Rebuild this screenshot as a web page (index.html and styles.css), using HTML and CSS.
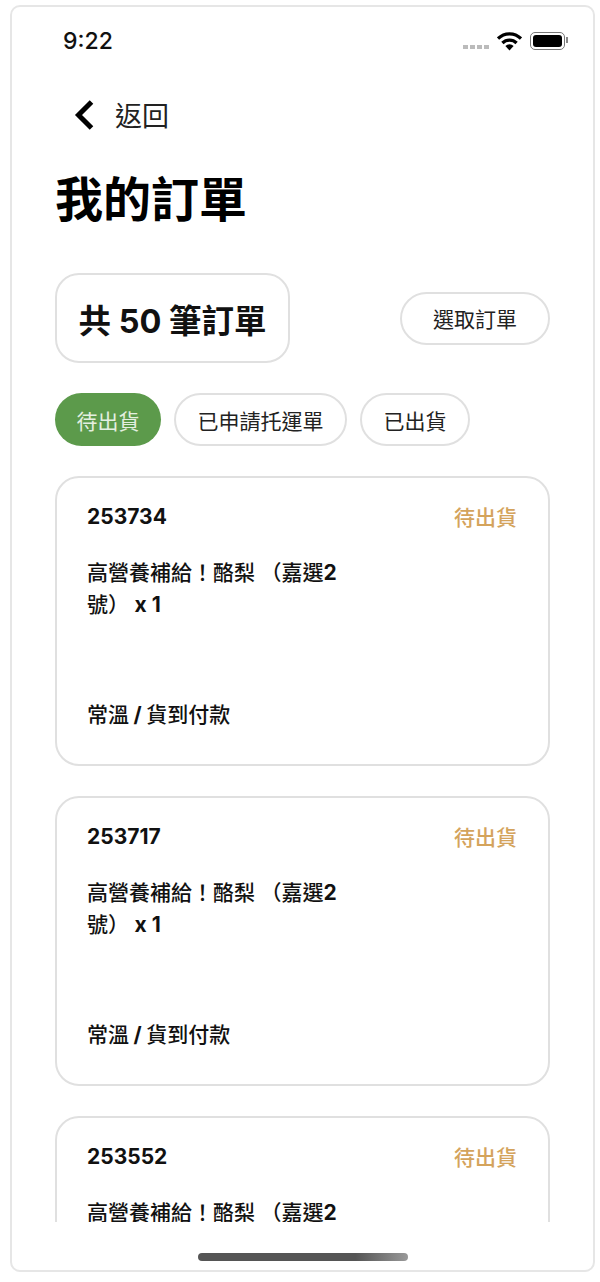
FILE: index.html
```html
<!DOCTYPE html>
<html lang="zh-Hant">
  <head>
    <meta charset="UTF-8" />
    <meta name="viewport" content="width=device-width, initial-scale=1.0" />
    <title>我的訂單</title>
    <link rel="stylesheet" href="styles.css">
  </head>
  <body>
    <section class="phone">
      <header class="status-bar">
        <span class="time">9:22</span>
        <div class="status-icons">
          <span class="signal"><i></i><i></i><i></i><i></i></span>
          <svg class="wifi" width="25" height="19" viewBox="0 0 25 19">
            <path d="M1 6.6a16.2 16.2 0 0 1 23 0" fill="none" stroke="#000" stroke-width="3.2"/>
            <path d="M5.4 11a10 10 0 0 1 14.2 0" fill="none" stroke="#000" stroke-width="3.2"/>
            <path d="M8.4 14a5.8 5.8 0 0 1 8.2 0L12.5 18.6z" fill="#000"/>
          </svg>
          <span class="battery"><i></i></span>
        </div>
      </header>

      <a class="back-link">
        <svg width="20" height="30" viewBox="0 0 20 30">
          <path d="M17.5 2L4.5 15l13 13" fill="none" stroke="#000" stroke-width="5"/>
        </svg>
        <span>返回</span>
      </a>

      <h1>我的訂單</h1>

      <div class="summary-row">
        <div class="summary">共 50 筆訂單</div>
        <button class="select-btn">選取訂單</button>
      </div>

      <nav class="tabs">
        <button class="tab active">待出貨</button>
        <button class="tab">已申請托運單</button>
        <button class="tab">已出貨</button>
      </nav>

      <div class="order-list">
        <article class="order">
          <div class="order-head">
            <span class="order-id">253734</span>
            <span class="order-status">待出貨</span>
          </div>
          <p class="order-items">高營養補給！酪梨 （嘉選<b>2</b>號） <b>x 1</b></p>
          <p class="order-meta">常溫 <b>/</b> 貨到付款</p>
        </article>

        <article class="order">
          <div class="order-head">
            <span class="order-id">253717</span>
            <span class="order-status">待出貨</span>
          </div>
          <p class="order-items">高營養補給！酪梨 （嘉選<b>2</b>號） <b>x 1</b></p>
          <p class="order-meta">常溫 <b>/</b> 貨到付款</p>
        </article>

        <article class="order">
          <div class="order-head">
            <span class="order-id">253552</span>
            <span class="order-status">待出貨</span>
          </div>
          <p class="order-items">高營養補給！酪梨 （嘉選<b>2</b>號） <b>x 1</b></p>
          <p class="order-meta">常溫 <b>/</b> 貨到付款</p>
        </article>
      </div>

      <div class="home-area">
        <div class="home-bar"></div>
      </div>
    </section>
  </body>
</html>
```
FILE: styles.css
```css
* {
  font-family: "Inter", "Noto Sans CJK TC", sans-serif;
  margin: 0;
  padding: 0;
  box-sizing: border-box;
}

body {
  background-color: #fff;
  padding: 5px 5px 10px 10px;
  height: 1282px;
  overflow: hidden;
}

button {
  background: #fff;
  color: #222;
  font-weight: 400;
}

.phone {
  display: flex;
  flex-direction: column;
  height: 1267px;
  padding: 0 43px;
  border: 2px solid #e6e6e6;
  border-radius: 10px;
}

.status-bar {
  display: flex;
  justify-content: space-between;
  align-items: center;
  height: 30px;
  margin-top: 19px;
}

.time {
  margin-left: 8px;
  font-size: 23px;
  font-weight: 500;
  color: #111;
}

.status-icons {
  display: flex;
  align-items: center;
  gap: 8px;
  margin-right: -15px;
}

.signal {
  display: flex;
  gap: 2px;
  margin-top: 11px;
  margin-left: 1px;
}

.signal i {
  width: 5px;
  height: 4px;
  background-color: #bbb;
}

.battery {
  position: relative;
  width: 35px;
  height: 18px;
  padding: 2px;
  border: 1.5px solid #777;
  border-radius: 5px;
}

.battery i {
  display: block;
  height: 100%;
  background-color: #000;
  border-radius: 3px;
}

.battery::after {
  content: "";
  position: absolute;
  right: -4px;
  top: 4px;
  width: 2px;
  height: 6px;
  background-color: #888;
}

.back-link {
  display: flex;
  align-items: center;
  gap: 21px;
  margin: 39px 0 0 19px;
  font-size: 27px;
  color: #222;
}

h1 {
  margin-top: 34px;
  font-size: 48px;
  font-weight: 700;
  line-height: 64px;
  color: #000;
}

.summary-row {
  display: flex;
  justify-content: space-between;
  align-items: center;
  margin-top: 41px;
}

.summary {
  display: flex;
  align-items: center;
  justify-content: center;
  width: 235px;
  height: 90px;
  border: 2px solid #e0e0e0;
  border-radius: 24px;
  font-size: 32.5px;
  font-weight: 700;
  color: #111;
}

.select-btn {
  width: 150px;
  height: 53px;
  border: 2px solid #e0e0e0;
  border-radius: 27px;
  font-size: 21px;
}

.tabs {
  display: flex;
  gap: 13px;
  margin-top: 30px;
}

.tab {
  height: 53px;
  padding: 0 21.5px;
  border: 2px solid #e0e0e0;
  border-radius: 27px;
  font-size: 21px;
}

.tab.active {
  background-color: #5c9a4b;
  border: none;
  color: #e4efe0;
}

.order-list {
  flex: 1;
  min-height: 0;
  overflow: hidden;
  margin-top: 30px;
}

.order {
  display: flex;
  flex-direction: column;
  height: 290px;
  margin-bottom: 30px;
  padding: 23px 31px 33px 30px;
  border: 2px solid #e0e0e0;
  border-radius: 24px;
}

.order-head {
  display: flex;
  justify-content: space-between;
  align-items: center;
  font-size: 21px;
}

.order-id {
  font-weight: 700;
  color: #111;
}

.order-status {
  color: #d4a35c;
  font-weight: 500;
}

.order-items {
  width: 264px;
  margin-top: 26px;
  font-size: 21px;
  font-weight: 500;
  line-height: 32px;
  color: #111;
}

.order-meta {
  margin-top: auto;
  font-size: 21px;
  font-weight: 500;
  line-height: 32px;
  word-spacing: -1px;
  color: #111;
}

.home-area {
  display: flex;
  justify-content: center;
  height: 48px;
  padding-top: 31px;
}

.home-bar {
  width: 210px;
  height: 8px;
  border-radius: 4px;
  background: linear-gradient(90deg, #555 0%, #555 75%, #999 100%);
}
```
